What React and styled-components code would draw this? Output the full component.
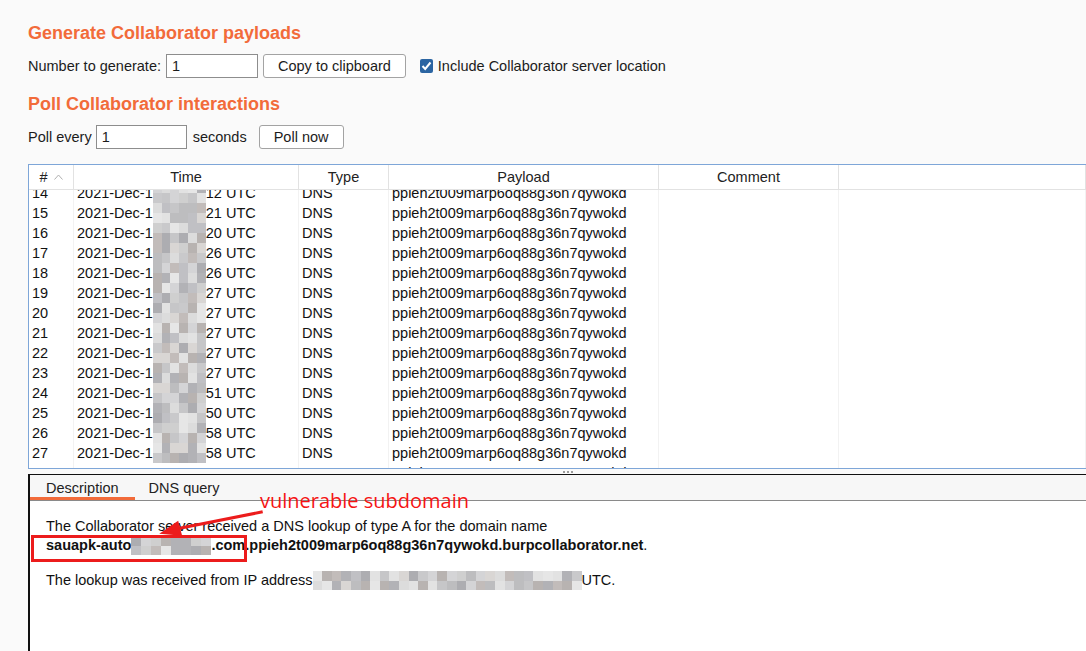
import React from 'react';
import styled, { createGlobalStyle } from 'styled-components';

const Global = createGlobalStyle`
  html, body { margin: 0; padding: 0; }
  body {
    background: #fafafa;
    font-family: "Liberation Sans", Arial, sans-serif;
    color: #1c1c1c;
    overflow: hidden;
    width: 1086px;
    height: 651px;
  }
`;

const Page = styled.div`
  height: 651px;
  box-sizing: border-box;
  display: flex;
  flex-direction: column;
  padding: 22px 0 0 28px;
`;

const Heading = styled.h2`
  margin: ${p => (p.$second ? '15px 0 10px' : '0 0 10px')};
  font-size: 18px;
  line-height: 22px;
  font-weight: bold;
  color: #f26b3a;
`;

const Row = styled.div`
  display: flex;
  align-items: center;
  height: 24px;
  font-size: 14.5px;
`;

const Label = styled.span`
  margin-right: ${p => p.$mr || 0}px;
  white-space: nowrap;
`;

const TextInput = styled.input`
  box-sizing: border-box;
  width: ${p => p.$w}px;
  height: 24px;
  border: 1px solid #8d8d8d;
  border-radius: 0;
  background: #fff;
  font-family: inherit;
  font-size: 14.5px;
  color: #1c1c1c;
  padding: 0 5px;
  margin: 0 ${p => p.$mr || 0}px 0 0;
  outline: none;
`;

const Button = styled.button`
  box-sizing: border-box;
  height: 24px;
  border: 1px solid #a3a3a3;
  border-radius: 3px;
  background: #fff;
  font-family: inherit;
  font-size: 14.5px;
  color: #1c1c1c;
  padding: 0 ${p => p.$px || 15}px;
  margin: 0 ${p => p.$mr || 0}px 0 ${p => p.$ml || 0}px;
  cursor: pointer;
`;

const CheckBox = styled.span`
  display: inline-flex;
  align-items: center;
  justify-content: center;
  width: 13px;
  height: 14px;
  border-radius: 2px;
  background: #2b65a2;
  margin-right: 5px;
`;

const Table = styled.div`
  margin-top: 15px;
  height: 305px;
  box-sizing: border-box;
  border: 1px solid #7ea6d8;
  border-right: none;
  background: #fff;
  display: flex;
  flex-direction: column;
  overflow: hidden;
`;

const cols = '45px 225px 90px 270px 180px 1fr';

const HeaderRow = styled.div`
  display: grid;
  grid-template-columns: ${cols};
  height: 25px;
  box-sizing: border-box;
  border-bottom: 1px solid #e2e2e2;
  font-size: 14.5px;
  color: #222;
  flex-shrink: 0;
`;

const HeaderCell = styled.div`
  display: flex;
  align-items: center;
  justify-content: center;
  gap: 6px;
  border-right: 1px solid #e2e2e2;
`;

const Body = styled.div`
  flex: 1;
  overflow: hidden;
`;

const Rows = styled.div`
  margin-top: -7px;
`;

const DataRow = styled.div`
  display: grid;
  grid-template-columns: ${cols};
  height: 20px;
  font-size: 14.5px;
  color: #111;
`;

const Cell = styled.div`
  display: flex;
  align-items: center;
  padding-left: 3px;
  border-right: 1px solid #f2f2f2;
  white-space: nowrap;
  overflow: hidden;
`;

const Splitter = styled.div`
  height: 5px;
  display: flex;
  align-items: center;
  justify-content: flex-start;
  padding-left: 535px;
  gap: 2px;
  flex-shrink: 0;
`;

const Dot = styled.span`
  width: 2px;
  height: 2px;
  background: #9c9c9c;
`;

const Panel = styled.div`
  position: relative;
  flex: 1;
  display: flex;
  flex-direction: column;
  border-top: 1px solid #111;
  border-left: 2px solid #111;
  background: #fff;
`;

const TabBar = styled.div`
  display: flex;
  height: 25px;
  background: #f7f7f7;
  border-bottom: 1px solid #8a8a8a;
  flex-shrink: 0;
`;

const Tab = styled.div`
  position: relative;
  display: flex;
  align-items: center;
  padding: 0 ${p => p.$px}px;
  font-size: 14.5px;
  color: #222;
  &::after {
    content: '';
    display: ${p => (p.$active ? 'block' : 'none')};
    position: absolute;
    left: 0;
    right: 0;
    bottom: 0;
    height: 3px;
    background: #f26b3a;
  }
`;

const Content = styled.div`
  padding: 16px 16px;
  font-size: 14.5px;
  line-height: 19px;
  color: #111;
`;

const Para = styled.p`
  margin: 0 0 16px;
  display: block;
`;

const Line = styled.span`
  display: flex;
  align-items: center;
  white-space: nowrap;
`;

const Bold = styled.b`
  font-weight: bold;
`;

const Overlay = styled.div`
  position: absolute;
  inset: 0;
  pointer-events: none;
`;

const Note = styled.span`
  position: absolute;
  left: 230px;
  top: 16px;
  font-family: "Open Sans", "DejaVu Sans", sans-serif;
  font-size: 20px;
  line-height: 1;
  color: #f51414;
  white-space: nowrap;
`;

const RedBox = styled.div`
  position: absolute;
  left: 1px;
  top: 60px;
  width: 216px;
  height: 27px;
  box-sizing: border-box;
  border: 3px solid #ec1c1c;
`;

const Arrow = styled.svg`
  position: absolute;
  left: 0;
  top: 0;
  width: 100%;
  height: 100%;
`;

const MosaicGrid = styled.span`
  display: inline-grid;
  grid-template-columns: repeat(${p => p.$cols}, 1fr);
  grid-template-rows: repeat(${p => p.$rows}, 1fr);
  width: ${p => p.$w}px;
  height: ${p => p.$h}px;
  flex-shrink: 0;
`;

const palette = ['#c9c9cb', '#bdbdbf', '#d4d4d6', '#b2b2b6', '#e2e2e2', '#c2bcba', '#c0c0c4', '#d9d6d4', '#adadb1', '#cfcfcf', '#e6e6e6', '#b8b3b1', '#dcdcdc', '#c6c6c8'];

function makeRng(seed) {
  let s = seed * 7919 + 17;
  return () => {
    s = (s * 9301 + 49297) % 233280;
    return s / 233280;
  };
}

function Mosaic({ w, h, cols, rows, seed }) {
  const rnd = makeRng(seed);
  const tiles = [];
  for (let i = 0; i < cols * rows; i++) {
    tiles.push(<span key={i} style={{ background: palette[Math.floor(rnd() * palette.length)] }} />);
  }
  return (
    <MosaicGrid $w={w} $h={h} $cols={cols} $rows={rows}>
      {tiles}
    </MosaicGrid>
  );
}

const data = [
  [14, '12'], [15, '21'], [16, '20'], [17, '26'], [18, '26'], [19, '27'], [20, '27'], [21, '27'],
  [22, '27'], [23, '27'], [24, '51'], [25, '50'], [26, '58'], [27, '58'],
];

const PAYLOAD = 'ppieh2t009marp6oq88g36n7qywokd';

function SortUp() {
  return (
    <svg width="9" height="6" viewBox="0 0 9 6">
      <polyline points="0.5,5.5 4.5,1 8.5,5.5" fill="none" stroke="#b0b0b0" strokeWidth="1" />
    </svg>
  );
}

export default function App() {
  return (
    <>
      <Global />
      <Page>
        <Heading>Generate Collaborator payloads</Heading>
        <Row>
          <Label $mr={5}>Number to generate:</Label>
          <TextInput $w={92} $mr={5} value="1" readOnly />
          <Button $px={14} $mr={14}>Copy to clipboard</Button>
          <CheckBox>
            <svg width="11" height="10" viewBox="0 0 11 10">
              <polyline points="1.5,5 4.2,8 9.5,1.5" fill="none" stroke="#fff" strokeWidth="2" />
            </svg>
          </CheckBox>
          <Label>Include Collaborator server location</Label>
        </Row>
        <Heading $second>Poll Collaborator interactions</Heading>
        <Row>
          <Label $mr={4}>Poll every</Label>
          <TextInput $w={91} $mr={6} value="1" readOnly />
          <Label $mr={12}>seconds</Label>
          <Button $px={14}>Poll now</Button>
        </Row>

        <Table>
          <HeaderRow>
            <HeaderCell># <SortUp /></HeaderCell>
            <HeaderCell>Time</HeaderCell>
            <HeaderCell>Type</HeaderCell>
            <HeaderCell>Payload</HeaderCell>
            <HeaderCell>Comment</HeaderCell>
            <HeaderCell />
          </HeaderRow>
          <Body>
            <Rows>
              {data.map(([n, sec]) => (
                <DataRow key={n}>
                  <Cell>{n}</Cell>
                  <Cell>
                    2021-Dec-1
                    <Mosaic w={53} h={20} cols={6} rows={2} seed={n} />
                    {sec} UTC
                  </Cell>
                  <Cell>DNS</Cell>
                  <Cell>{PAYLOAD}</Cell>
                  <Cell />
                  <Cell />
                </DataRow>
              ))}
              <DataRow>
                <Cell>28</Cell>
                <Cell>2021-Dec-16 15:17:09 UTC</Cell>
                <Cell>DNS</Cell>
                <Cell>{PAYLOAD}</Cell>
                <Cell />
                <Cell />
              </DataRow>
            </Rows>
          </Body>
        </Table>

        <Splitter>
          <Dot />
          <Dot />
          <Dot />
        </Splitter>

        <Panel>
          <TabBar>
            <Tab $active $px={16}>Description</Tab>
            <Tab $px={14}>DNS query</Tab>
          </TabBar>
          <Content>
            <Para>
              <Line>The Collaborator server received a DNS lookup of type A for the domain name</Line>
              <Line>
                <Bold>sauapk-auto</Bold>
                <Mosaic w={80} h={19} cols={8} rows={2} seed={99} />
                <Bold>.com.{PAYLOAD}.burpcollaborator.net</Bold>.
              </Line>
            </Para>
            <Para>
              <Line>
                The lookup was received from IP address
                <Mosaic w={269} h={19} cols={28} rows={2} seed={42} />
                UTC.
              </Line>
            </Para>
          </Content>
          <Overlay>
            <Note>vulnerable subdomain</Note>
            <RedBox />
            <Arrow viewBox="0 0 1058 177" preserveAspectRatio="xMinYMin meet">
              <line x1="234" y1="37" x2="148" y2="54" stroke="#ec1c1c" strokeWidth="3" />
              <polygon points="130,59 149,46 153,61" fill="#ec1c1c" />
            </Arrow>
          </Overlay>
        </Panel>
      </Page>
    </>
  );
}
